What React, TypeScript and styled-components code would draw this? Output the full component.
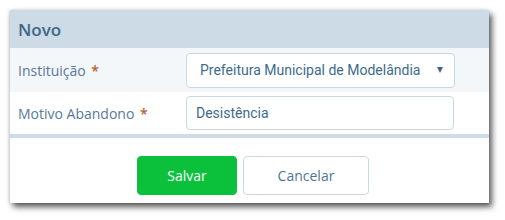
import styled, { createGlobalStyle } from "styled-components";

const GlobalStyle = createGlobalStyle`
  body {
    margin: 0;
    background: #ffffff;
    font-family: "Open Sans", "Liberation Sans", sans-serif;
  }
`;

const Page = styled.div`
  padding: 10px 16px 17px 10px;
`;

const Panel = styled.div`
  width: 479px;
  background: #ffffff;
  box-shadow: 3px 4px 6px rgba(0, 0, 0, 0.65), -1px 0 3px rgba(0, 0, 0, 0.15);
`;

const Header = styled.div`
  height: 38px;
  display: flex;
  align-items: center;
  padding: 0 8px;
  background: #ccdbe5;
  color: #3f6886;
  font-size: 17px;
  font-weight: 600;
`;

const Row = styled.div<{ $shaded?: boolean; $height: number }>`
  height: ${(p) => p.$height}px;
  display: flex;
  align-items: center;
  padding: 0 8px;
  background: ${(p) => (p.$shaded ? "#f3f7fa" : "#ffffff")};
`;

const Label = styled.label`
  width: 168px;
  font-size: 14px;
  color: #58799a;
`;

const Required = styled.span`
  color: #b5612a;
  font-weight: 600;
  margin-left: 2px;
`;

const Select = styled.div`
  width: 269px;
  height: 35px;
  box-sizing: border-box;
  display: flex;
  align-items: center;
  justify-content: space-between;
  padding: 0 11px 0 13px;
  border: 1px solid #c9d8e3;
  border-radius: 4px;
  background: #ffffff;
  font-family: Roboto, "Liberation Sans", sans-serif;
  font-size: 14px;
  color: #3d6b8d;
`;

const Caret = styled.span`
  width: 0;
  height: 0;
  border-left: 3.5px solid transparent;
  border-right: 3.5px solid transparent;
  border-top: 6px solid #3f6886;
`;

const Input = styled.div`
  width: 268px;
  height: 34px;
  box-sizing: border-box;
  display: flex;
  align-items: center;
  padding: 0 9px;
  border: 1px solid #c9d8e3;
  border-radius: 4px;
  background: #ffffff;
  font-family: Roboto, "Liberation Sans", sans-serif;
  font-size: 14px;
  color: #3d6b8d;
`;

const Divider = styled.div`
  height: 4px;
  background: #cddce6;
`;

const Footer = styled.div`
  height: 65px;
  box-sizing: border-box;
  display: flex;
  justify-content: center;
  gap: 6px;
  padding-top: 18px;
  padding-left: 7px;
`;

const Button = styled.button<{ $primary?: boolean; $width: number }>`
  width: ${(p) => p.$width}px;
  height: 39px;
  border-radius: 4px;
  border: 1px solid ${(p) => (p.$primary ? "#0bc13c" : "#c9d8e3")};
  background: ${(p) => (p.$primary ? "#0bc13c" : "#ffffff")};
  color: ${(p) => (p.$primary ? "#ffffff" : "#4f7594")};
  font-family: "Open Sans", "Liberation Sans", sans-serif;
  font-size: 14px;
  cursor: pointer;
`;

export default function App() {
  return (
    <>
      <GlobalStyle />
      <Page>
        <Panel>
          <Header>Novo</Header>
          <Row $shaded $height={44}>
            <Label>
              Instituição <Required>*</Required>
            </Label>
            <Select>
              <span>Prefeitura Municipal de Modelândia</span>
              <Caret />
            </Select>
          </Row>
          <Row $height={42}>
            <Label>
              Motivo Abandono <Required>*</Required>
            </Label>
            <Input>Desistência</Input>
          </Row>
          <Divider />
          <Footer>
            <Button $primary $width={100}>Salvar</Button>
            <Button $width={126}>Cancelar</Button>
          </Footer>
        </Panel>
      </Page>
    </>
  );
}
